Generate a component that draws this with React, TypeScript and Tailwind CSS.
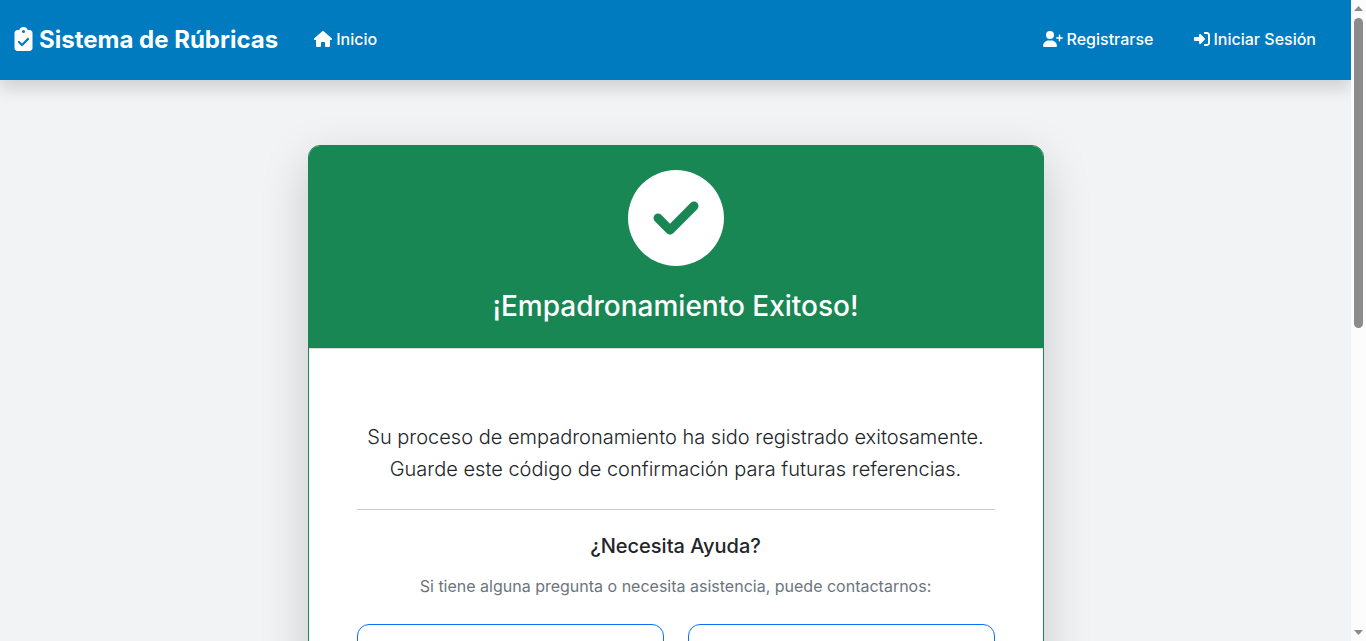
import { FaCircleCheck, FaClipboardCheck, FaHouse, FaRightToBracket, FaUserPlus } from "react-icons/fa6";

function Navbar() {
  return (
    <header className="relative z-10 flex h-20 shrink-0 items-center bg-[#007bc0] pl-[14px] pr-[19px] text-white shadow-[0_8px_16px_rgba(0,0,0,0.15)]">
      <a href="#" className="flex items-center gap-[6px] text-2xl font-bold">
        <FaClipboardCheck aria-hidden="true" className="mb-0.5 h-6 w-[19px]" />
        <span>Sistema de Rúbricas</span>
      </a>
      <nav className="ml-5 flex flex-1 items-center justify-between pb-0.5 font-medium">
        <a href="#inicio" className="flex items-center gap-1 px-4 py-2">
          <FaHouse aria-hidden="true" className="h-4 w-[18px]" />
          Inicio
        </a>
        <div className="flex items-center gap-2">
          <a href="#registro" className="flex items-center gap-1 px-4 py-2">
            <FaUserPlus aria-hidden="true" className="h-4 w-5" />
            Registrarse
          </a>
          <a href="#sesion" className="flex items-center gap-1 px-4 py-2">
            <FaRightToBracket aria-hidden="true" />
            Iniciar Sesión
          </a>
        </div>
      </nav>
    </header>
  );
}

function ConfirmationCard() {
  return (
    <section className="w-full max-w-[736px] overflow-hidden rounded-xl border border-[#198754] bg-white text-center shadow-[0_16px_48px_rgba(0,0,0,0.175)]">
      <div className="flex flex-col items-center gap-6 border-b border-black/15 bg-[#198754] bg-clip-padding pt-6 pb-[26px] text-white">
        <FaCircleCheck aria-hidden="true" className="size-24" />
        <h1 className="text-[28px] leading-8 font-medium">¡Empadronamiento Exitoso!</h1>
      </div>
      <div className="px-12 pt-[72px] pb-12 text-[#212529]">
        <p className="text-xl leading-8 font-light">
          Su proceso de empadronamiento ha sido registrado exitosamente. Guarde este código de
          confirmación para futuras referencias.
        </p>
        <hr className="my-6 border-[#212529]/25" />
        <h2 className="text-xl leading-6 font-medium">¿Necesita Ayuda?</h2>
        <p className="mt-4 leading-6 text-[#6c757d]">
          Si tiene alguna pregunta o necesita asistencia, puede contactarnos:
        </p>
        <div className="mt-[26px] grid grid-cols-2 gap-6">
          <div className="h-36 rounded-xl border border-[#0d6efd]" />
          <div className="h-36 rounded-xl border border-[#0d6efd]" />
        </div>
      </div>
    </section>
  );
}

function ScrollRail() {
  return (
    <div aria-hidden="true" className="flex w-[15px] shrink-0 flex-col items-center justify-between bg-[#fcfcfc] py-[6px]">
      <div className="flex min-h-0 flex-1 flex-col items-center gap-[7px]">
        <svg width="9" height="5" viewBox="0 0 9 5" fill="#8b8b8b">
          <path d="M4.5 0 9 5H0z" />
        </svg>
        <div className="h-[310px] w-[9px] rounded-full bg-[#8b8b8b]" />
      </div>
      <svg width="9" height="5" viewBox="0 0 9 5" fill="#8b8b8b">
        <path d="M0 0h9L4.5 5z" />
      </svg>
    </div>
  );
}

export default function App() {
  return (
    <div className="flex h-screen overflow-hidden bg-[#f1f3f5] font-['Inter',sans-serif] text-base">
      <div className="min-w-0 flex-1 overflow-hidden">
        <Navbar />
        <main className="flex justify-center px-3 py-[65px]">
          <ConfirmationCard />
        </main>
      </div>
      <ScrollRail />
    </div>
  );
}
